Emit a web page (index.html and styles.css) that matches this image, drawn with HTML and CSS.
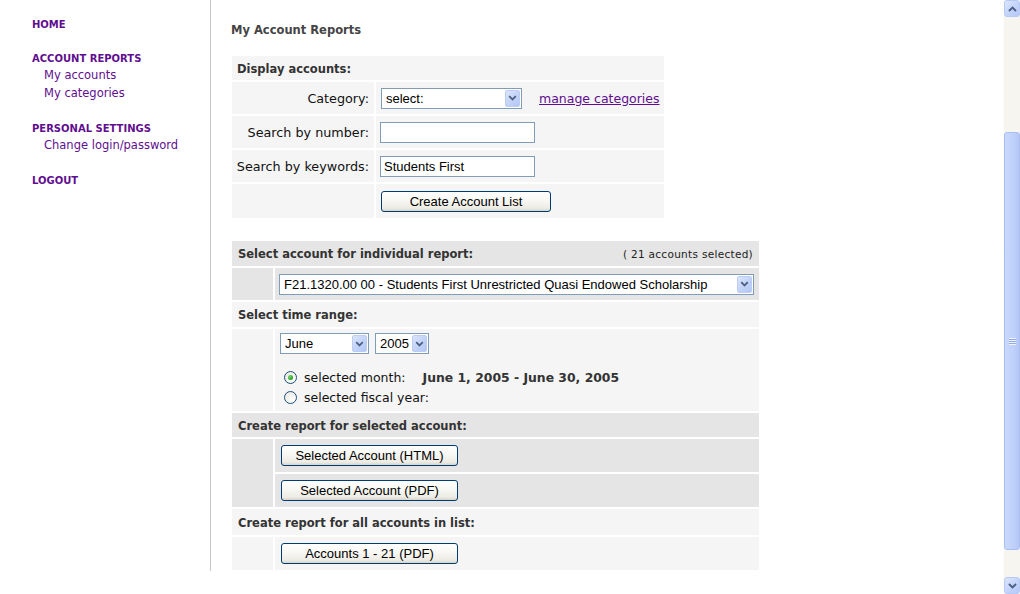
FILE: index.html
```html
<!DOCTYPE html>
<html>
<head>
<meta charset="utf-8">
<title>My Account Reports</title>
<link rel="stylesheet" href="styles.css">
</head>
<body>
<div class="page">
  <div class="frame">
    <nav class="sidebar">
      <div class="nav-group">
        <a class="nav-head" href="#">HOME</a>
      </div>
      <div class="nav-group">
        <a class="nav-head" href="#">ACCOUNT REPORTS</a>
        <a class="nav-item" href="#">My accounts</a>
        <a class="nav-item" href="#">My categories</a>
      </div>
      <div class="nav-group">
        <a class="nav-head" href="#">PERSONAL SETTINGS</a>
        <a class="nav-item" href="#">Change login/password</a>
      </div>
      <div class="nav-group">
        <a class="nav-head" href="#">LOGOUT</a>
      </div>
    </nav>
    <main class="main">
      <h1 class="title">My Account Reports</h1>

      <div class="tbl tbl-display">
        <div class="cell head span2 light">Display accounts:</div>

        <div class="cell label light">Category:</div>
        <div class="cell value light">
          <div class="xsel sel-cat"><span class="xsel-val">select:</span><span class="xsel-btn"><svg width="9" height="6" viewBox="0 0 9 6"><path d="M1.2 1.2 L4.5 4.4 L7.8 1.2" stroke="#4d6185" stroke-width="1.8" fill="none"/></svg></span></div>
          <a class="manage" href="#">manage categories</a>
        </div>

        <div class="cell label light">Search by number:</div>
        <div class="cell value light"><input class="xinput" type="text" value=""></div>

        <div class="cell label light">Search by keywords:</div>
        <div class="cell value light"><input class="xinput" type="text" value="Students First"></div>

        <div class="cell light"></div>
        <div class="cell value light btn-cell"><button class="xbtn btn-create">Create Account List</button></div>
      </div>

      <div class="tbl tbl-report">
        <div class="cell head span2 dark spread">
          <span>Select account for individual report:</span>
          <span class="count">( 21 accounts selected)</span>
        </div>

        <div class="cell dark"></div>
        <div class="cell dark acct-cell">
          <div class="xsel sel-acct"><span class="xsel-val">F21.1320.00 00 - Students First Unrestricted Quasi Endowed Scholarship</span><span class="xsel-btn"><svg width="9" height="6" viewBox="0 0 9 6"><path d="M1.2 1.2 L4.5 4.4 L7.8 1.2" stroke="#4d6185" stroke-width="1.8" fill="none"/></svg></span></div>
        </div>

        <div class="cell head span2 light">Select time range:</div>

        <div class="cell light"></div>
        <div class="cell light time-cell">
          <div class="date-row">
            <div class="xsel sel-month"><span class="xsel-val">June</span><span class="xsel-btn"><svg width="9" height="6" viewBox="0 0 9 6"><path d="M1.2 1.2 L4.5 4.4 L7.8 1.2" stroke="#4d6185" stroke-width="1.8" fill="none"/></svg></span></div>
            <div class="xsel sel-year"><span class="xsel-val">2005</span><span class="xsel-btn"><svg width="9" height="6" viewBox="0 0 9 6"><path d="M1.2 1.2 L4.5 4.4 L7.8 1.2" stroke="#4d6185" stroke-width="1.8" fill="none"/></svg></span></div>
          </div>
          <div class="radio-row">
            <span class="radio checked"></span>
            <span class="radio-label">selected month:</span>
            <span class="range">June 1, 2005 - June 30, 2005</span>
          </div>
          <div class="radio-row">
            <span class="radio"></span>
            <span class="radio-label">selected fiscal year:</span>
          </div>
        </div>

        <div class="cell head span2 dark">Create report for selected account:</div>

        <div class="cell dark span-rows"></div>
        <div class="cell dark btn-row"><button class="xbtn btn-report">Selected Account (HTML)</button></div>
        <div class="cell dark btn-row"><button class="xbtn btn-report">Selected Account (PDF)</button></div>

        <div class="cell head span2 light">Create report for all accounts in list:</div>

        <div class="cell light"></div>
        <div class="cell light btn-row"><button class="xbtn btn-report">Accounts 1 - 21 (PDF)</button></div>
      </div>
    </main>
  </div>
  <div class="scrollbar">
    <div class="sb-btn"><svg width="9" height="6" viewBox="0 0 9 6"><path d="M1 5 L4.5 1.6 L8 5" stroke="#4d6185" stroke-width="2" fill="none"/></svg></div>
    <div class="sb-track">
      <div class="sb-thumb"><span class="grip"></span></div>
    </div>
    <div class="sb-btn"><svg width="9" height="6" viewBox="0 0 9 6"><path d="M1 1 L4.5 4.4 L8 1" stroke="#4d6185" stroke-width="2" fill="none"/></svg></div>
  </div>
</div>
</body>
</html>
```

FILE: styles.css
```css
html, body {
  margin: 0;
  padding: 0;
  background: #ffffff;
}

.page {
  display: flex;
  width: 1020px;
  height: 594px;
  overflow: hidden;
}

.frame {
  flex: 1;
  display: flex;
  align-items: flex-start;
}

/* Sidebar */
.sidebar {
  width: 211px;
  height: 571px;
  border-right: 1px solid #c8c8c8;
  padding-top: 15px;
  box-sizing: border-box;
  display: flex;
  flex-direction: column;
  gap: 17px;
  flex: none;
}

.nav-group {
  display: flex;
  flex-direction: column;
}

.nav-head {
  font-family: "DejaVu Sans", Verdana, sans-serif;
  font-size: 10px;
  font-weight: bold;
  line-height: 16px;
  padding-top: 2px;
  margin-bottom: -1px;
  color: #5f0e8f;
  text-decoration: none;
  padding-left: 32px;
}

.nav-item {
  font-family: "DejaVu Sans", Verdana, sans-serif;
  font-size: 11.5px;
  line-height: 18px;
  color: #5f0e8f;
  text-decoration: none;
  padding-left: 44px;
}

/* Main */
.main {
  padding: 21px 0 0 20px;
}

.title {
  margin: 0 0 17px 0;
  font-family: "DejaVu Sans", Verdana, sans-serif;
  font-size: 11.5px;
  font-weight: bold;
  line-height: 18px;
  color: #444444;
}

.tbl {
  display: grid;
  gap: 2px;
  margin-left: 1px;
}

.tbl-display {
  grid-template-columns: 142px 288px;
  grid-template-rows: 24px 32px 32px 32px 34px;
}

.tbl-report {
  margin-top: 23px;
  grid-template-columns: 41px 484px;
  grid-template-rows: 25px 32px 25px 82px 24px 33px 33px 26px 33px;
}

.cell {
  display: flex;
  align-items: center;
  box-sizing: border-box;
}

.light { background: #f5f5f5; }
.dark { background: #e5e5e5; }

.span2 { grid-column: 1 / span 2; }
.span-rows { grid-row: span 2; }

.head {
  font-family: "DejaVu Sans", Verdana, sans-serif;
  font-size: 11.5px;
  font-weight: bold;
  color: #333333;
  padding-left: 5px;
  padding-top: 1px;
}

.tbl-report .head {
  padding-left: 6px;
  padding-right: 6px;
}

.spread {
  justify-content: space-between;
}

.count {
  font-family: "DejaVu Sans", Verdana, sans-serif;
  font-size: 10.5px;
  letter-spacing: 0.3px;
  font-weight: normal;
  color: #222222;
}

.label {
  justify-content: flex-end;
  padding-right: 5px;
  font-family: "DejaVu Sans", Verdana, sans-serif;
  font-size: 12.75px;
  color: #111111;
}

.value {
  padding-left: 4px;
}

.btn-cell {
  padding-left: 5px;
}

.manage {
  margin-left: 17px;
  font-family: "DejaVu Sans", Verdana, sans-serif;
  font-size: 12.5px;
  color: #5f0e8f;
  text-decoration: underline;
}

/* XP-like select */
.xsel {
  display: flex;
  align-items: stretch;
  height: 21px;
  box-sizing: border-box;
  border: 1px solid #7f9db9;
  background: #ffffff;
  padding: 1px;
}

.xsel-val {
  flex: 1;
  display: flex;
  align-items: center;
  padding-left: 3px;
  font-family: "Liberation Sans", Arial, sans-serif;
  font-size: 13px;
  color: #000000;
  white-space: nowrap;
  overflow: hidden;
}

.xsel-btn {
  width: 15px;
  flex: none;
  display: flex;
  align-items: center;
  justify-content: center;
  box-sizing: border-box;
  border: 1px solid #bccdf3;
  border-radius: 2px;
  background: linear-gradient(135deg, #dbe5fb 0%, #c4d4f8 50%, #b3c7f3 100%);
}

.sel-cat { width: 141px; margin-left: 1px; }
.sel-acct { width: 475px; }
.sel-month { width: 89px; }
.sel-year { width: 54px; }

.acct-cell {
  padding-left: 4px;
}

/* Inputs */
.xinput {
  width: 155px;
  height: 21px;
  box-sizing: border-box;
  border: 1px solid #7f9db9;
  background: #ffffff;
  margin: 0;
  padding: 0 3px;
  font-family: "Liberation Sans", Arial, sans-serif;
  font-size: 13px;
  color: #000000;
  outline: none;
}

/* Buttons */
.xbtn {
  height: 21px;
  box-sizing: border-box;
  border: 1px solid #003c74;
  border-radius: 3px;
  background: linear-gradient(#ffffff 0%, #f7f7f3 45%, #ecebe4 85%, #d8d4c8 100%);
  font-family: "Liberation Sans", Arial, sans-serif;
  font-size: 13px;
  color: #000000;
  padding: 0;
  margin: 0;
}

.btn-create { width: 170px; }
.btn-report { width: 177px; }

.btn-row {
  padding-left: 6px;
}

/* Time range */
.time-cell {
  flex-direction: column;
  align-items: flex-start;
  padding: 4px 0 0 5px;
}

.date-row {
  display: flex;
  gap: 6px;
  margin-bottom: 13px;
}

.radio-row {
  display: flex;
  align-items: center;
  height: 20px;
  padding-left: 4px;
}

.radio {
  width: 13px;
  height: 13px;
  box-sizing: border-box;
  border: 1px solid #1c5180;
  border-radius: 50%;
  background: radial-gradient(circle at 65% 65%, #ffffff 0%, #f0efe8 60%, #dcdbd2 100%);
  display: flex;
  align-items: center;
  justify-content: center;
}

.radio.checked::after {
  content: "";
  width: 5px;
  height: 5px;
  border-radius: 50%;
  background: radial-gradient(circle at 35% 35%, #77d46f 0%, #21a121 70%);
}

.radio-label {
  margin-left: 7px;
  font-family: "DejaVu Sans", Verdana, sans-serif;
  font-size: 12.5px;
  color: #111111;
}

.range {
  margin-left: 17px;
  font-family: "DejaVu Sans", Verdana, sans-serif;
  font-size: 12.4px;
  font-weight: bold;
  color: #333333;
}

/* Scrollbar */
.scrollbar {
  width: 17px;
  flex: none;
  display: flex;
  flex-direction: column;
  background: #f6f5ef;
  border-left: 1px solid #fdfdfb;
  box-sizing: border-box;
}

.sb-btn {
  height: 17px;
  flex: none;
  display: flex;
  align-items: center;
  justify-content: center;
  box-sizing: border-box;
  border: 1px solid #b7caf5;
  border-radius: 3px;
  background: linear-gradient(135deg, #dce6fd 0%, #c5d5fb 50%, #b5c9f7 100%);
}

.sb-track {
  flex: 1;
  display: flex;
  flex-direction: column;
}

.sb-thumb {
  margin-top: 115px;
  height: 418px;
  box-sizing: border-box;
  border: 1px solid #a9bff0;
  border-radius: 3px;
  background: linear-gradient(90deg, #c9d8fc 0%, #c1d2fb 50%, #b4c8f7 100%);
  display: flex;
  align-items: center;
  justify-content: center;
}

.grip {
  width: 7px;
  height: 7px;
  background: repeating-linear-gradient(#eef3fe 0 1px, #8fa9e4 1px 2px);
}
```
